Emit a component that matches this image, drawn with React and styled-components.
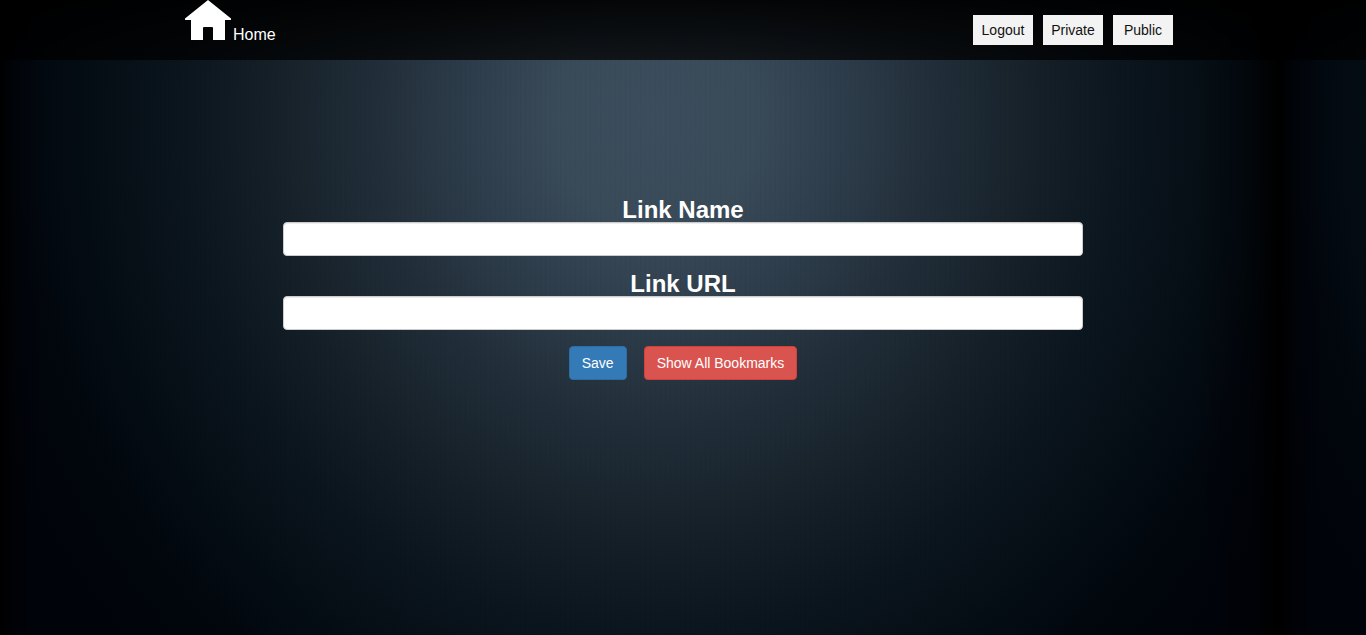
import React from "react";
import styled, { createGlobalStyle } from "styled-components";

const GlobalStyle = createGlobalStyle`
  *, *::before, *::after { box-sizing: border-box; }
  body {
    margin: 0;
    font-family: "Liberation Sans", Arial, sans-serif;
    font-size: 14px;
    line-height: 20px;
    color: #fff;
    background: #000;
  }
`;

/* Woven dark-blue backdrop: a 1280px wide tile that repeats sideways. */
const Page = styled.div`
  min-height: 100vh;
  background-color: #00040a;
  background-image:
    repeating-linear-gradient(90deg, rgba(0, 0, 0, 0.03) 0 1px, transparent 1px 5px),
    linear-gradient(90deg, #000 0, rgba(0, 0, 0, 0.3) 15px, rgba(0, 0, 0, 0) 40px, rgba(0, 0, 0, 0) 1200px, rgba(0, 0, 0, 0.3) 1250px, #000 1280px),
    linear-gradient(180deg, rgba(0, 0, 0, 0.7) 0, rgba(0, 0, 0, 0) 60px),
    radial-gradient(ellipse 720px 780px at 655px 120px,
      #3c4e5d 0%, #394a59 14%, #2e3d4b 26%, #202d38 40%, #151f27 54%, #0b151d 66%, #040c13 80%, #01050c 90%, #00030a 100%);
  background-size: 1280px 100%;
  background-repeat: repeat-x;
`;

const NavBar = styled.header`
  height: 60px;
  background: rgba(0, 0, 0, 0.72);
`;

const NavInner = styled.nav`
  max-width: 1000px;
  margin: 0 auto;
  display: flex;
  justify-content: space-between;
  align-items: flex-start;
`;

const HomeLink = styled.a`
  display: flex;
  align-items: baseline;
  font-size: 16px;
  color: #fff;
  text-decoration: none;
`;

const NavLinks = styled.div`
  display: flex;
  gap: 10px;
  padding: 15px 10px 0 0;
`;

const NavButton = styled.button`
  width: 60px;
  height: 30px;
  padding: 0;
  border: 0;
  background: #f3f3f3;
  color: #111;
  font: inherit;
  cursor: pointer;
`;

const Form = styled.form`
  max-width: 800px;
  margin: 0 auto;
  padding-top: 138px;
  display: flex;
  flex-direction: column;
  gap: 16px;
`;

const Field = styled.div`
  display: flex;
  flex-direction: column;
`;

const Label = styled.label`
  font-size: 24px;
  line-height: 24px;
  font-weight: 700;
  text-align: center;
`;

const TextInput = styled.input`
  width: 100%;
  height: 34px;
  padding: 6px 12px;
  border: 1px solid #ccc;
  border-radius: 4px;
  background: #fff;
  color: #555;
  font: inherit;
  box-shadow: inset 0 1px 1px rgba(0, 0, 0, 0.075);
`;

const Actions = styled.div`
  display: flex;
  justify-content: center;
  gap: 17px;
`;

const variants = {
  primary: { fill: "#337ab7", edge: "#2e6da4" },
  danger: { fill: "#d9534f", edge: "#d43f3a" },
};

const ActionButton = styled.button`
  padding: 6px 12px;
  border: 1px solid ${({ $variant }) => variants[$variant].edge};
  border-radius: 4px;
  background: ${({ $variant }) => variants[$variant].fill};
  color: #fff;
  font: inherit;
  cursor: pointer;
`;

function HouseIcon() {
  return (
    <svg width="50" height="40" viewBox="0 0 50 40" fill="#fff" aria-hidden="true">
      <path d="M25 0 L48 18.5 V20 H42 V40 H30 V28 Q30 27 29 27 H21 Q20 27 20 28 V40 H8 V20 H2 V18.5 Z" />
    </svg>
  );
}

export default function App() {
  return (
    <Page>
      <GlobalStyle />
      <NavBar>
        <NavInner>
          <HomeLink href="#home">
            <HouseIcon />
            Home
          </HomeLink>
          <NavLinks>
            <NavButton type="button">Logout</NavButton>
            <NavButton type="button">Private</NavButton>
            <NavButton type="button">Public</NavButton>
          </NavLinks>
        </NavInner>
      </NavBar>
      <main>
        <Form onSubmit={(event) => event.preventDefault()}>
          <Field>
            <Label htmlFor="link-name">Link Name</Label>
            <TextInput id="link-name" type="text" />
          </Field>
          <Field>
            <Label htmlFor="link-url">Link URL</Label>
            <TextInput id="link-url" type="text" />
          </Field>
          <Actions>
            <ActionButton type="submit" $variant="primary">Save</ActionButton>
            <ActionButton type="button" $variant="danger">Show All Bookmarks</ActionButton>
          </Actions>
        </Form>
      </main>
    </Page>
  );
}
